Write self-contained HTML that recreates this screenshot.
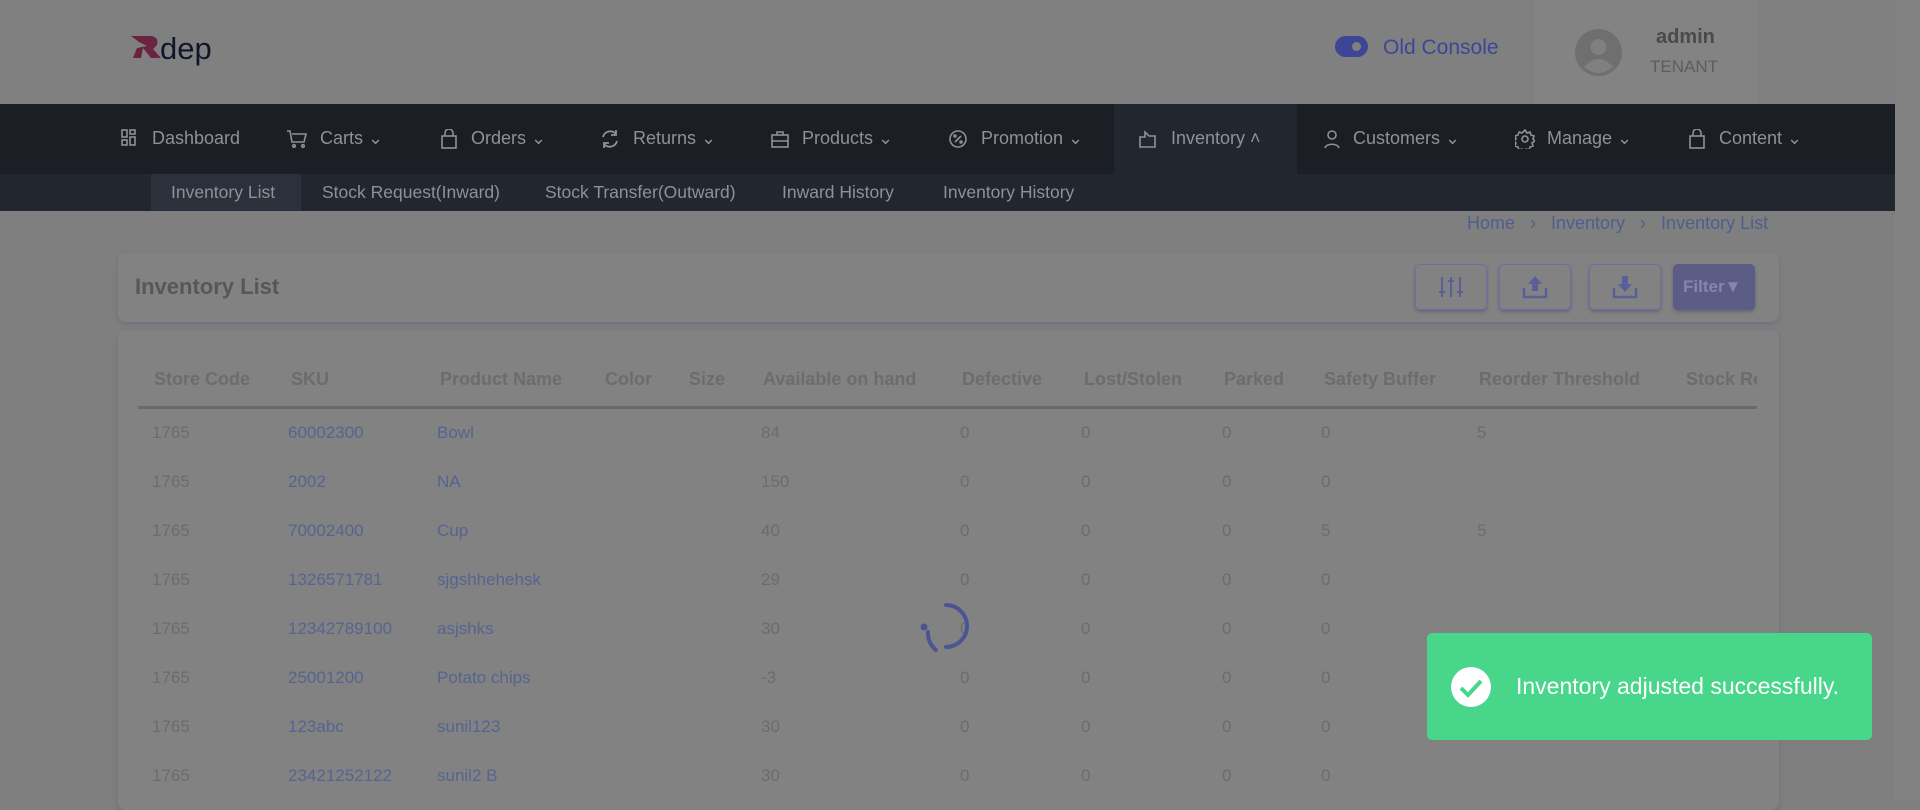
<!DOCTYPE html>
<html><head><meta charset="utf-8"><style>
*{box-sizing:border-box;margin:0;padding:0}
body{width:1920px;height:800px;overflow:hidden;background:#7f7f7f;font-family:"Liberation Sans",sans-serif;position:relative}
.abs{position:absolute}
.hdr{left:0;top:0;width:1895px;height:104px;background:#808080}
.userpanel{left:1535px;top:0;width:222px;height:104px;background:#838383}
.sb{left:1895px;top:0;width:25px;height:800px;background:#828283}
.nav{left:0;top:104px;width:1895px;height:70px;background:#1b1e25}
.navact{left:1114px;top:104px;width:183px;height:70px;background:#22262e}
.sub{left:0;top:174px;width:1895px;height:37px;background:#22262e}
.subact{left:151px;top:174px;width:150px;height:37px;background:#2b313b}
.ni{top:126px;font-size:18px;color:#8f9196;line-height:24px;white-space:nowrap}
.si{top:181px;font-size:17.5px;color:#8f9196;line-height:22px;white-space:nowrap}
.ic{position:absolute;top:129px}
.bc{top:213px;font-size:18px;color:#4f5f8c;white-space:nowrap}
.card{background:#828282;border-radius:8px;box-shadow:0 2px 4px rgba(80,80,120,.35)}
.btn{top:264px;width:72px;height:46px;border:1.5px solid #6a6fa8;border-radius:5px;box-shadow:0 2px 3px rgba(60,60,100,.4)}
.th{top:369px;font-size:18px;font-weight:bold;color:#6c6c6c;white-space:nowrap}
.td{font-size:17px;color:#6c6c6c;white-space:nowrap}
.lk{color:#56648f}
</style></head><body>
<div class="abs hdr"></div>
<div class="abs userpanel"></div>
<div class="abs sb"></div>
<svg class="abs" style="left:129px;top:34px" width="110" height="36" viewBox="0 0 110 36">
<path d="M2 2 L22 2 Q30 3 28 11 L24 15 L32 24 L22 24 L14 14 L12 24 L4 24 L8 14 L18 12 L10 8 Z" fill="#6a2340"/>
<text x="31" y="25" font-family="Liberation Sans" font-size="31" fill="#111628">dep</text>
</svg>
<div class="abs" style="left:1335px;top:36px;width:33px;height:21px;border-radius:11px;background:#3d4597"></div>
<div class="abs" style="left:1352px;top:42px;width:9px;height:9px;border-radius:50%;background:#808080"></div>
<div class="abs" style="left:1383px;top:36px;font-size:21px;color:#3d4597">Old Console</div>
<svg class="abs" style="left:1575px;top:29px" width="47" height="47" viewBox="0 0 47 47"><circle cx="23.5" cy="23.5" r="23.5" fill="#6f6f6f"/><circle cx="23.5" cy="18" r="8" fill="#808080"/><path d="M9 38 Q23.5 22 38 38 Q23.5 50 9 38Z" fill="#808080"/></svg>
<div class="abs" style="left:1656px;top:26px;font-size:20px;font-weight:bold;color:#4a4a4a">admin</div>
<div class="abs" style="left:1650px;top:57px;font-size:17px;color:#5d5d5d">TENANT</div>

<div class="abs nav"></div><div class="abs navact"></div>
<div class="abs sub"></div><div class="abs subact"></div>
<svg class="ic" style="left:121px" width="16" height="18" fill="none" stroke="#8f9196" stroke-width="1.6"><rect x="1" y="1" width="5" height="7"/><rect x="9" y="1" width="5" height="4"/><rect x="1" y="11" width="5" height="5"/><rect x="9" y="8" width="5" height="8"/></svg>
<svg class="ic" style="left:286px" width="22" height="20" fill="none" stroke="#8f9196" stroke-width="1.6"><path d="M1 2h3l2 11h12l2-8H6"/><circle cx="8" cy="17" r="1.3"/><circle cx="17" cy="17" r="1.3"/></svg>
<svg class="ic" style="left:440px" width="18" height="20" fill="none" stroke="#8f9196" stroke-width="1.6"><rect x="2" y="7" width="14" height="12"/><path d="M5 7V4a4 4 0 018 0v3"/></svg>
<svg class="ic" style="left:600px" width="20" height="20" fill="none" stroke="#8f9196" stroke-width="1.8"><path d="M16 5A7.5 7.5 0 003 8M4 15a7.5 7.5 0 0013-3"/><path d="M16 1v5h-5M4 19v-5h5"/></svg>
<svg class="ic" style="left:770px" width="20" height="20" fill="none" stroke="#8f9196" stroke-width="1.6"><rect x="2" y="6" width="16" height="12"/><path d="M7 6V3h6v3M2 12h16"/></svg>
<svg class="ic" style="left:948px" width="20" height="20" fill="none" stroke="#8f9196" stroke-width="1.6"><circle cx="10" cy="10" r="8"/><path d="M7 13l6-6"/><circle cx="7" cy="7" r="1"/><circle cx="13" cy="13" r="1"/></svg>
<svg class="ic" style="left:1138px" width="20" height="20" fill="none" stroke="#8f9196" stroke-width="1.6"><path d="M2 18V8h5V3l4 4h6v11z"/></svg>
<svg class="ic" style="left:1323px" width="18" height="20" fill="none" stroke="#8f9196" stroke-width="1.6"><circle cx="9" cy="6" r="4"/><path d="M2 19c1-5 13-5 14 0"/></svg>
<svg class="ic" style="left:1515px" width="20" height="20" fill="none" stroke="#8f9196" stroke-width="1.6"><circle cx="10" cy="10" r="3"/><path d="M10 1l2 3 3-1 1 3 3 1-1 3 2 2-3 2 1 3-3 1-1 3-3-1-2 2-2-2-3 1-1-3-3-1 1-3-2-2 2-2-1-3 3-1 1-3 3 1z"/></svg>
<svg class="ic" style="left:1688px" width="18" height="20" fill="none" stroke="#8f9196" stroke-width="1.6"><rect x="2" y="7" width="14" height="12"/><path d="M5 7V4a4 4 0 018 0v3"/></svg>
<div class="abs ni" style="left:152px">Dashboard</div>
<div class="abs ni" style="left:320px">Carts ⌄</div>
<div class="abs ni" style="left:471px">Orders ⌄</div>
<div class="abs ni" style="left:633px">Returns ⌄</div>
<div class="abs ni" style="left:802px">Products ⌄</div>
<div class="abs ni" style="left:981px">Promotion ⌄</div>
<div class="abs ni" style="left:1171px">Inventory ˄</div>
<div class="abs ni" style="left:1353px">Customers ⌄</div>
<div class="abs ni" style="left:1547px">Manage ⌄</div>
<div class="abs ni" style="left:1719px">Content ⌄</div>
<div class="abs si" style="left:171px">Inventory List</div>
<div class="abs si" style="left:322px">Stock Request(Inward)</div>
<div class="abs si" style="left:545px">Stock Transfer(Outward)</div>
<div class="abs si" style="left:782px">Inward History</div>
<div class="abs si" style="left:943px">Inventory History</div>

<div class="abs bc" style="left:1467px">Home &nbsp;&nbsp;›&nbsp;&nbsp; Inventory &nbsp;&nbsp;›&nbsp;&nbsp; Inventory List</div>

<div class="abs card" style="left:118px;top:253px;width:1661px;height:69px"></div>
<div class="abs" style="left:135px;top:274px;font-size:22px;font-weight:bold;color:#575757">Inventory List</div>
<div class="abs btn" style="left:1415px"></div>
<div class="abs btn" style="left:1499px"></div>
<div class="abs btn" style="left:1589px"></div>
<div class="abs" style="left:1673px;top:264px;width:82px;height:46px;background:#5c5d87;border-radius:5px;box-shadow:0 2px 3px rgba(60,60,100,.4);color:#8486ad;font-weight:bold;font-size:17px;line-height:46px;padding-left:10px">Filter▼</div>
<svg class="abs" style="left:1438px;top:276px" width="26" height="22" fill="none" stroke="#5a5f9a" stroke-width="2"><path d="M4 1v20M13 1v20M22 1v20M1 16h6M10 5h6M19 16h6"/></svg>
<svg class="abs" style="left:1522px;top:275px" width="26" height="24" fill="#5a5f9a"><path d="M13 1l7 8h-4v7h-6V9H6z"/><path d="M2 13v9h22v-9" fill="none" stroke="#5a5f9a" stroke-width="2.4"/></svg>
<svg class="abs" style="left:1612px;top:275px" width="26" height="24" fill="#5a5f9a"><path d="M13 17l7-8h-4V1h-6v8H6z"/><path d="M2 13v9h22v-9" fill="none" stroke="#5a5f9a" stroke-width="2.4"/></svg>

<div class="abs card" style="left:118px;top:330px;width:1661px;height:480px"></div>
<div class="abs" style="left:138px;top:406px;width:1619px;height:3px;background:#6a6a6a"></div>
<div class="abs th" style="left:154px">Store Code</div>
<div class="abs th" style="left:291px">SKU</div>
<div class="abs th" style="left:440px">Product Name</div>
<div class="abs th" style="left:605px">Color</div>
<div class="abs th" style="left:689px">Size</div>
<div class="abs th" style="left:763px">Available on hand</div>
<div class="abs th" style="left:962px">Defective</div>
<div class="abs th" style="left:1084px">Lost/Stolen</div>
<div class="abs th" style="left:1224px">Parked</div>
<div class="abs th" style="left:1324px">Safety Buffer</div>
<div class="abs th" style="left:1479px">Reorder Threshold</div>
<div class="abs" style="left:1686px;top:369px;width:71px;overflow:hidden;font-size:18px;font-weight:bold;color:#6c6c6c;white-space:nowrap">Stock Reserved</div>

<div id="rows"></div>
<script>
var d=[["60002300","Bowl","84","0","5"],["2002","NA","150","0",""],["70002400","Cup","40","5","5"],["1326571781","sjgshhehehsk","29","0",""],["12342789100","asjshks","30","0",""],["25001200","Potato chips","-3","0",""],["123abc","sunil123","30","0",""],["23421252122","sunil2 B","30","0",""]];
var h="";d.forEach(function(r,i){var y=423+i*49;
h+='<div class="abs td" style="left:152px;top:'+y+'px">1765</div><div class="abs td lk" style="left:288px;top:'+y+'px">'+r[0]+'</div><div class="abs td lk" style="left:437px;top:'+y+'px">'+r[1]+'</div><div class="abs td" style="left:761px;top:'+y+'px">'+r[2]+'</div>';
[960,1081,1222].forEach(function(x){h+='<div class="abs td" style="left:'+x+'px;top:'+y+'px">0</div>'});
h+='<div class="abs td" style="left:1321px;top:'+y+'px">'+r[3]+'</div>';
if(r[4])h+='<div class="abs td" style="left:1477px;top:'+y+'px">'+r[4]+'</div>';});
document.getElementById("rows").innerHTML=h;
</script>
<svg class="abs" style="left:908px;top:600px" width="64" height="60"><path d="M38 5 A21 21 0 0 1 38 47 M28 50 A21 21 0 0 1 20 32" fill="none" stroke="#4b5594" stroke-width="4" stroke-linecap="round"/><circle cx="16" cy="27" r="3.5" fill="#4b5594"/></svg>

<div class="abs" style="left:1427px;top:633px;width:445px;height:107px;background:#48d68a;border-radius:5px"></div>
<svg class="abs" style="left:1451px;top:667px" width="40" height="40"><circle cx="20" cy="20" r="20" fill="#fff"/><path d="M10 21l7 7 13-14" fill="none" stroke="#48d68a" stroke-width="4"/></svg>
<div class="abs" style="left:1516px;top:673px;font-size:23px;color:#fff;white-space:nowrap">Inventory adjusted successfully.</div>
</body></html>
